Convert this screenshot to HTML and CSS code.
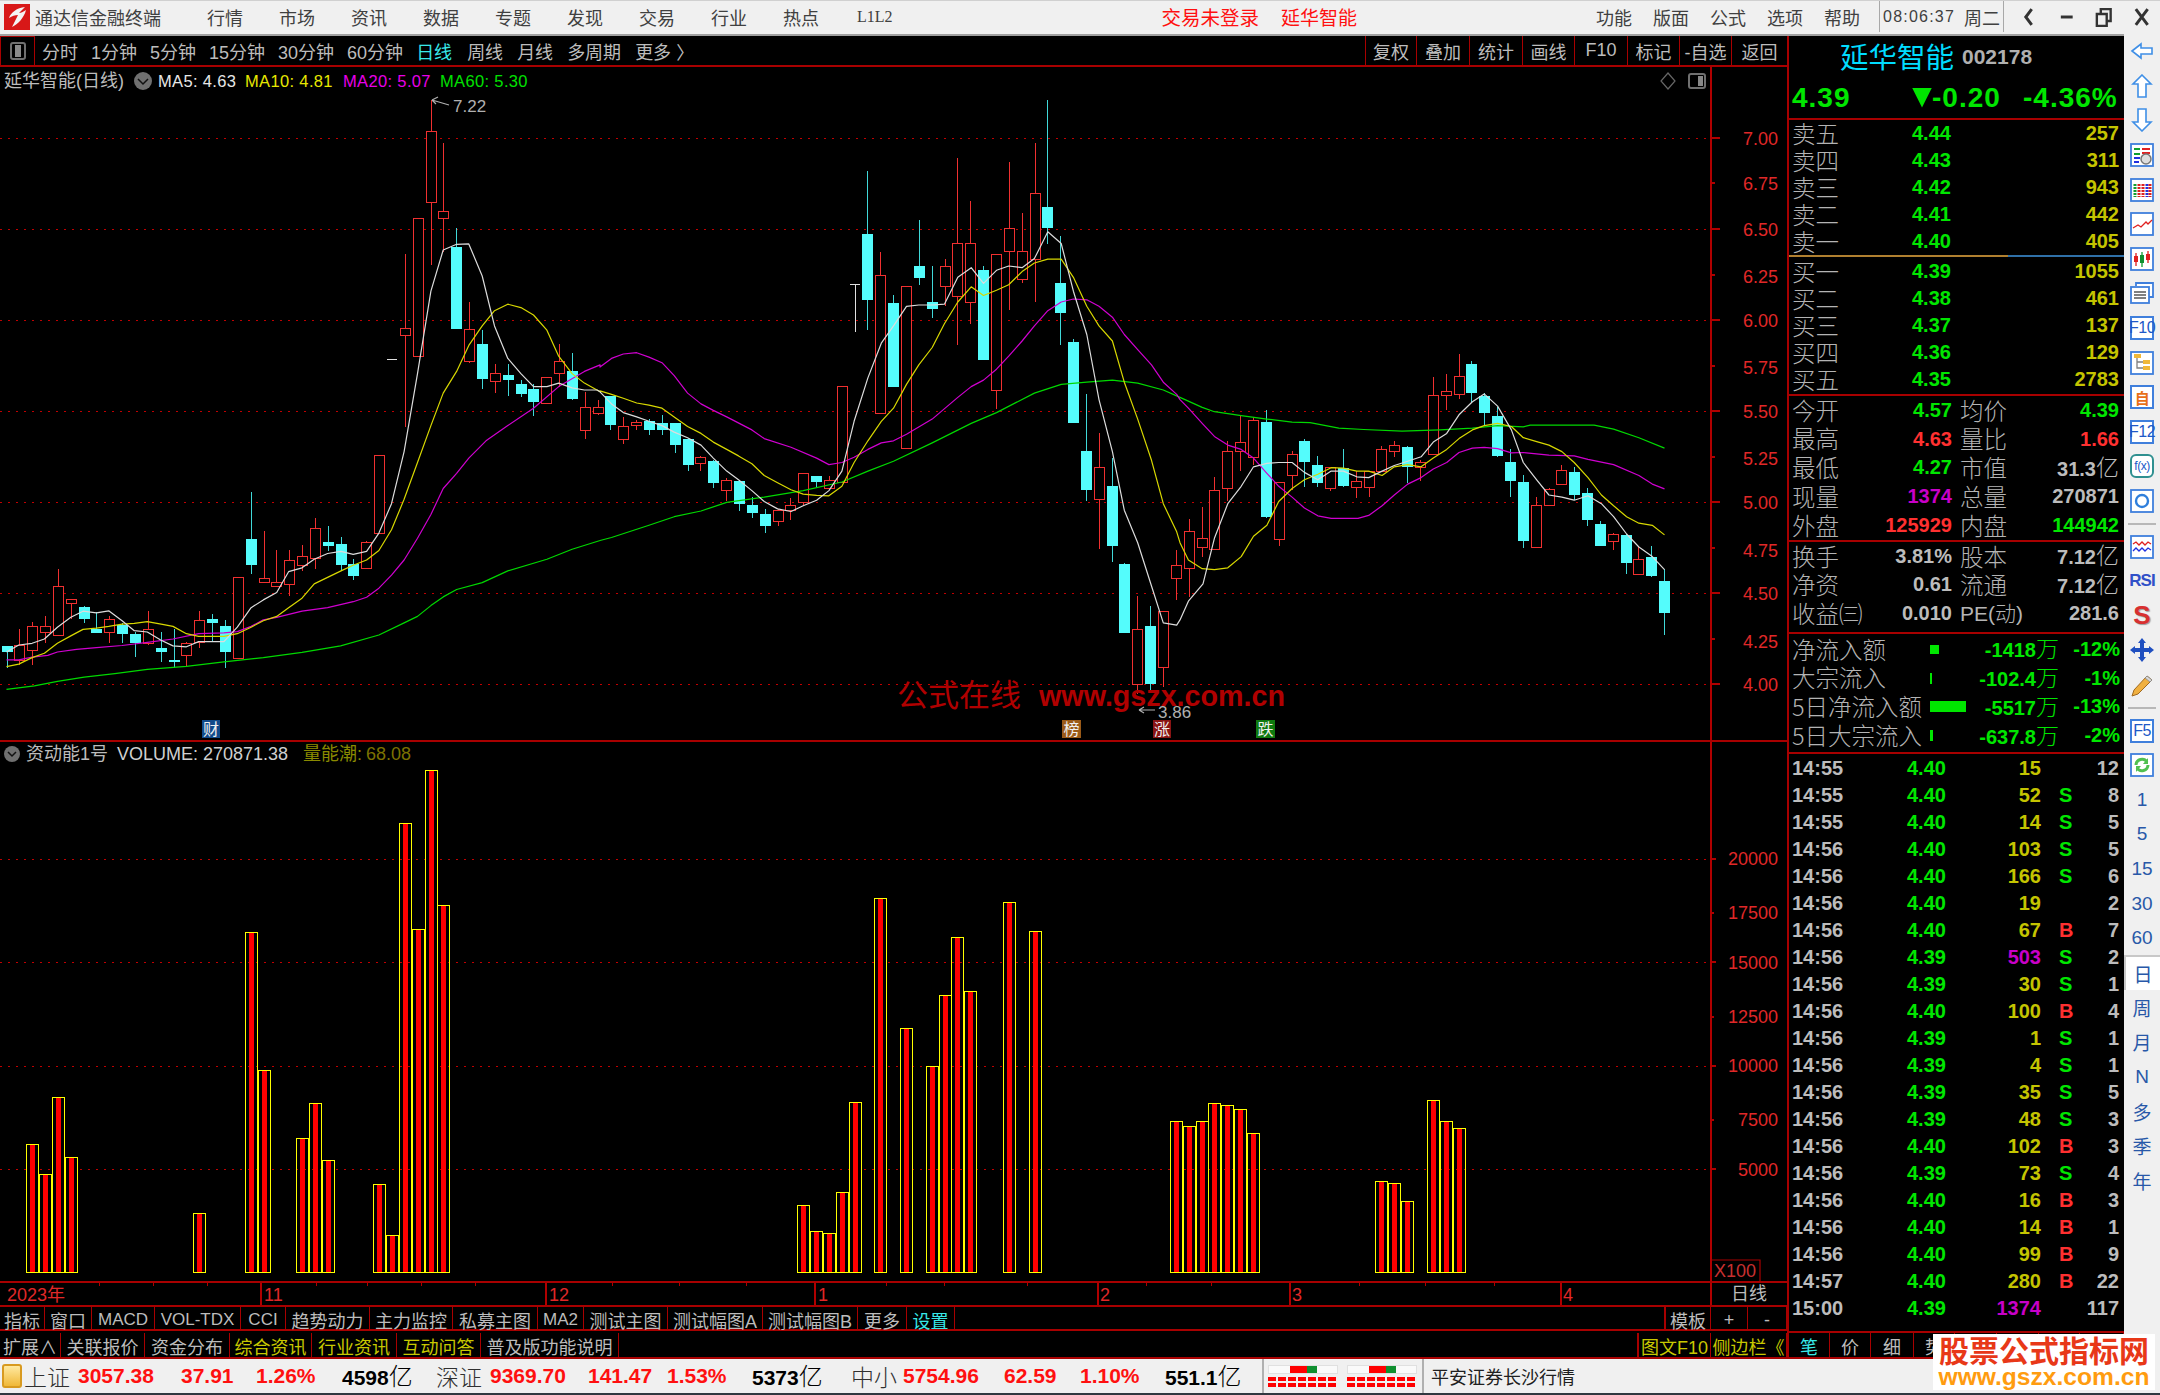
FILE: index.html
```html
<!DOCTYPE html>
<html lang="zh-CN">
<head>
<meta charset="utf-8">
<title>通达信金融终端</title>
<link rel="stylesheet" href="styles.css">
</head>
<body>
<div class="app">
  <header class="titlebar">
    <svg class="logo" viewBox="0 0 26 26"><rect width="26" height="26" fill="#d81818"/><path d="M21 3 C13 4 7 8 5 14 C8 12 11 11 14 11 L8 23 C14 20 20 14 22 6 C19 8 17 9 15 9 Z" fill="#f4f4f4"/></svg>
    <span class="brand">通达信金融终端</span>
    <nav class="menu">
      <span>行情</span><span>市场</span><span>资讯</span><span>数据</span><span>专题</span><span>发现</span><span>交易</span><span>行业</span><span>热点</span><span class="menu-l2">L1L2</span>
    </nav>
    <div class="alert"><span class="alert-a">交易未登录</span><span class="alert-b">延华智能</span></div>
    <nav class="menu menu-right"><span>功能</span><span>版面</span><span>公式</span><span>选项</span><span>帮助</span></nav>
    <div class="clock"><span class="clock-time">08:06:37</span><span class="clock-day">周二</span></div>
    <div class="winbtns">
      <svg viewBox="0 0 38 30"><path d="M22 7 L16 15 L22 23" class="win-stroke"/></svg>
      <svg viewBox="0 0 38 30"><path d="M13 15 H25" class="win-stroke"/></svg>
      <svg viewBox="0 0 38 30"><path d="M12 12 H22 V24 H12 Z M16 12 V7 H26 V19 H22" class="win-stroke win-thin"/></svg>
      <svg viewBox="0 0 38 30"><path d="M13 7 L25 23 M25 7 L13 23" class="win-stroke"/></svg>
    </div>
  </header>

  <div class="workspace">
    <section class="charts">
      <nav class="periods">
        <span class="period-toggle"><i class="split-ico"></i></span>
        <div class="period-list">
          <span>分时</span><span>1分钟</span><span>5分钟</span><span>15分钟</span><span>30分钟</span><span>60分钟</span><span class="is-cyan">日线</span>
        </div>
        <div class="period-list period-list-b">
          <span>周线</span><span>月线</span><span>多周期</span><span>更多 〉</span>
        </div>
        <div class="period-tools">
          <span>复权</span><span>叠加</span><span>统计</span><span>画线</span><span>F10</span><span>标记</span><span>-自选</span><span>返回</span>
        </div>
      </nav>

      <svg id="price" class="chart chart-price" viewBox="0 67 1787 673">
        <g class="grid">
          <path d="M0 138.5H1711M0 229.5H1711M0 320.5H1711M0 411.5H1711M0 502.5H1711M0 593.5H1711M0 684.5H1711"/>
        </g>
        <path class="axis" d="M1711 67V740"/>
        <path class="axis" d="M1711 138h9M1711 229h9M1711 320h9M1711 411h9M1711 502h9M1711 593h9M1711 684h9M1711 183h4M1711 275h4M1711 366h4M1711 457h4M1711 548h4M1711 639h4"/>
        <g class="t-axis">
          <text x="1778" y="139">7.00</text><text x="1778" y="184">6.75</text><text x="1778" y="230">6.50</text><text x="1778" y="277">6.25</text><text x="1778" y="321">6.00</text><text x="1778" y="368">5.75</text><text x="1778" y="412">5.50</text><text x="1778" y="459">5.25</text><text x="1778" y="503">5.00</text><text x="1778" y="551">4.75</text><text x="1778" y="594">4.50</text><text x="1778" y="642">4.25</text><text x="1778" y="685">4.00</text>
        </g>
        <g id="candles"></g>
        <g id="malines"></g>
        <text class="t-name" x="4" y="87">延华智能(日线)</text>
        <circle class="t-circle" cx="143" cy="81" r="9"/><path class="t-chev" d="M138 79 L143 84 L148 79"/>
        <text class="t-ma ma5" x="158" y="87">MA5: 4.63</text>
        <text class="t-ma ma10" x="245" y="87">MA10: 4.81</text>
        <text class="t-ma ma20" x="343" y="87">MA20: 5.07</text>
        <text class="t-ma ma60" x="440" y="87">MA60: 5.30</text>
        <path class="t-arrow" d="M449 105 L432 100 M432 100 L438 97 M432 100 L436 104"/>
        <text class="t-note" x="453" y="112">7.22</text>
        <path class="t-arrow" d="M1155 710 H1139 M1139 710 L1144 707 M1139 710 L1144 713"/>
        <text class="t-water-cn" x="897" y="706">公式在线</text>
        <text class="t-water-en" x="1039" y="706">www.gszx.com.cn</text>
        <text class="t-note" x="1158" y="718">3.86</text>
        <rect class="badge-blue" x="202" y="720" width="18" height="18"/><text class="t-badge" x="211" y="735">财</text>
        <rect class="badge-brown" x="1062" y="720" width="19" height="18"/><text class="t-badge" x="1071.5" y="735">榜</text>
        <rect class="badge-red" x="1153" y="720" width="18" height="18"/><text class="t-badge" x="1162" y="735">涨</text>
        <rect class="badge-green" x="1256" y="720" width="19" height="18"/><text class="t-badge" x="1265.5" y="735">跌</text>
        <path class="t-diamond" d="M1668 73 L1675 81 L1668 89 L1661 81 Z"/>
        <rect class="t-win" x="1689" y="74" width="16" height="14" rx="2"/><rect class="t-win-bar" x="1698" y="76" width="5" height="10"/>
      </svg>

      <svg id="volume" class="chart chart-volume" viewBox="0 742 1787 539">
        <g class="grid"><path d="M0 859.5H1711M0 962.5H1711M0 1066.5H1711M0 1169.5H1711"/></g>
        <path class="axis" d="M1711 742V1281M1711 859h5M1711 962h5M1711 1066h5M1711 1169h5M1711 913h3M1711 1017h3M1711 1120h3"/>
        <g class="t-axis t-axis-vol">
          <text x="1778" y="859">20000</text><text x="1778" y="913">17500</text><text x="1778" y="963">15000</text><text x="1778" y="1017">12500</text><text x="1778" y="1066">10000</text><text x="1778" y="1120">7500</text><text x="1778" y="1170">5000</text>
        </g>
        <g id="bars"></g>
        <circle class="t-circle" cx="12" cy="754" r="8"/><path class="t-chev" d="M8 752 L12 756 L16 752"/>
        <text class="t-name" x="26" y="760">资动能1号</text>
        <text class="t-name t-latin" x="117" y="760">VOLUME: 270871.38</text>
        <text class="t-name t-olive" x="303" y="760">量能潮:</text>
        <text class="t-name t-latin t-dim" x="366" y="760">68.08</text>
        <path class="t-box" d="M1711 1260H1760V1281"/>
        <text class="t-x100" x="1714" y="1277">X100</text>
      </svg>

      <svg class="chart chart-axis" viewBox="0 1283 1787 22">
        <path class="axis" d="M261 1283V1305M546 1283V1305M815 1283V1305M1098 1283V1305M1290 1283V1305M1561 1283V1305M1711 1283V1305"/>
        <path class="axis axis-thin" d="M99 1283v3M153 1283v3M207 1283v3M316 1283v3M367 1283v3M421 1283v3M475 1283v3M612 1283v3M679 1283v3M746 1283v3M886 1283v3M944 1283v3M1027 1283v3M1146 1283v3M1211 1283v3M1359 1283v3M1425 1283v3M1494 1283v3"/>
        <g class="t-month">
          <text x="7" y="1301">2023年</text><text x="264" y="1301">11</text><text x="549" y="1301">12</text><text x="818" y="1301">1</text><text x="1100" y="1301">2</text><text x="1292" y="1301">3</text><text x="1563" y="1301">4</text>
        </g>
        <text class="t-period" x="1749" y="1300">日线</text>
      </svg>

      <nav class="tabs tabs-a">
        <span>指标</span><span>窗口</span><span class="tab-latin">MACD</span><span class="tab-latin">VOL-TDX</span><span class="tab-latin">CCI</span><span>趋势动力</span><span>主力监控</span><span>私募主图</span><span class="tab-latin">MA2</span><span>测试主图</span><span>测试幅图A</span><span>测试幅图B</span><span>更多</span><span class="is-cyan">设置</span><span></span><span class="tab-left">模板</span><span>+</span><span>-</span>
      </nav>
      <nav class="tabs tabs-b">
        <span>扩展∧</span><span>关联报价</span><span>资金分布</span><span class="is-olive">综合资讯</span><span class="is-olive">行业资讯</span><span class="is-olive">互动问答</span><span>普及版功能说明</span><span></span><span class="is-olive tab-left">图文F10</span><span class="is-olive">侧边栏《</span>
      </nav>
    </section>

    <aside class="quote">
      <div class="q-head">
        <div class="q-name"><span class="q-title">延华智能</span><span class="q-code">002178</span></div>
        <div class="q-price"><span>4.39</span><span class="q-change"><i class="q-down"></i>-0.20</span><span>-4.36%</span></div>
      </div>
      <div class="q-book">
        <div class="b-row"><span class="lbl">卖五</span><span class="g">4.44</span><span class="y r">257</span></div>
        <div class="b-row"><span class="lbl">卖四</span><span class="g">4.43</span><span class="y r">311</span></div>
        <div class="b-row"><span class="lbl">卖三</span><span class="g">4.42</span><span class="y r">943</span></div>
        <div class="b-row"><span class="lbl">卖二</span><span class="g">4.41</span><span class="y r">442</span></div>
        <div class="b-row"><span class="lbl">卖一</span><span class="g">4.40</span><span class="y r">405</span></div>
      </div>
      <div class="q-divider"></div>
      <div class="q-book q-book-bid">
        <div class="b-row"><span class="lbl">买一</span><span class="g">4.39</span><span class="y r">1055</span></div>
        <div class="b-row"><span class="lbl">买二</span><span class="g">4.38</span><span class="y r">461</span></div>
        <div class="b-row"><span class="lbl">买三</span><span class="g">4.37</span><span class="y r">137</span></div>
        <div class="b-row"><span class="lbl">买四</span><span class="g">4.36</span><span class="y r">129</span></div>
        <div class="b-row"><span class="lbl">买五</span><span class="g">4.35</span><span class="y r">2783</span></div>
      </div>
      <div class="q-stats">
        <div class="s-row"><span class="lbl">今开</span><span class="g r">4.57</span><span class="lbl l2">均价</span><span class="g r">4.39</span></div>
        <div class="s-row"><span class="lbl">最高</span><span class="red r">4.63</span><span class="lbl l2">量比</span><span class="red r">1.66</span></div>
        <div class="s-row"><span class="lbl">最低</span><span class="g r">4.27</span><span class="lbl l2">市值</span><span class="w r">31.3<em>亿</em></span></div>
        <div class="s-row"><span class="lbl">现量</span><span class="m r">1374</span><span class="lbl l2">总量</span><span class="w r">270871</span></div>
        <div class="s-row"><span class="lbl">外盘</span><span class="red r">125929</span><span class="lbl l2">内盘</span><span class="g r">144942</span></div>
      </div>
      <div class="q-stats q-stats-b">
        <div class="s-row"><span class="lbl">换手</span><span class="w r">3.81%</span><span class="lbl l2">股本</span><span class="w r">7.12<em>亿</em></span></div>
        <div class="s-row"><span class="lbl">净资</span><span class="w r">0.61</span><span class="lbl l2">流通</span><span class="w r">7.12<em>亿</em></span></div>
        <div class="s-row"><span class="lbl">收益㈢</span><span class="w r">0.010</span><span class="lbl l2 lbl-pe">PE(动)</span><span class="w r">281.6</span></div>
      </div>
      <div class="q-flow">
        <div class="f-row"><span class="lbl">净流入额</span><i class="fbar fbar-a"></i><span class="g r">-1418<em>万</em></span><span class="g r">-12%</span></div>
        <div class="f-row"><span class="lbl">大宗流入</span><i class="fbar fbar-b"></i><span class="g r">-102.4<em>万</em></span><span class="g r">-1%</span></div>
        <div class="f-row"><span class="lbl">5日净流入额</span><i class="fbar fbar-c"></i><span class="g r">-5517<em>万</em></span><span class="g r">-13%</span></div>
        <div class="f-row"><span class="lbl">5日大宗流入</span><i class="fbar fbar-d"></i><span class="g r">-637.8<em>万</em></span><span class="g r">-2%</span></div>
      </div>
      <div class="q-ticks">
        <div class="t-row"><span class="w">14:55</span><span class="g">4.40</span><span class="y r">15</span><span></span><span class="w r">12</span></div>
        <div class="t-row"><span class="w">14:55</span><span class="g">4.40</span><span class="y r">52</span><span class="g">S</span><span class="w r">8</span></div>
        <div class="t-row"><span class="w">14:55</span><span class="g">4.40</span><span class="y r">14</span><span class="g">S</span><span class="w r">5</span></div>
        <div class="t-row"><span class="w">14:56</span><span class="g">4.40</span><span class="y r">103</span><span class="g">S</span><span class="w r">5</span></div>
        <div class="t-row"><span class="w">14:56</span><span class="g">4.40</span><span class="y r">166</span><span class="g">S</span><span class="w r">6</span></div>
        <div class="t-row"><span class="w">14:56</span><span class="g">4.40</span><span class="y r">19</span><span></span><span class="w r">2</span></div>
        <div class="t-row"><span class="w">14:56</span><span class="g">4.40</span><span class="y r">67</span><span class="red">B</span><span class="w r">7</span></div>
        <div class="t-row"><span class="w">14:56</span><span class="g">4.39</span><span class="m r">503</span><span class="g">S</span><span class="w r">2</span></div>
        <div class="t-row"><span class="w">14:56</span><span class="g">4.39</span><span class="y r">30</span><span class="g">S</span><span class="w r">1</span></div>
        <div class="t-row"><span class="w">14:56</span><span class="g">4.40</span><span class="y r">100</span><span class="red">B</span><span class="w r">4</span></div>
        <div class="t-row"><span class="w">14:56</span><span class="g">4.39</span><span class="y r">1</span><span class="g">S</span><span class="w r">1</span></div>
        <div class="t-row"><span class="w">14:56</span><span class="g">4.39</span><span class="y r">4</span><span class="g">S</span><span class="w r">1</span></div>
        <div class="t-row"><span class="w">14:56</span><span class="g">4.39</span><span class="y r">35</span><span class="g">S</span><span class="w r">5</span></div>
        <div class="t-row"><span class="w">14:56</span><span class="g">4.39</span><span class="y r">48</span><span class="g">S</span><span class="w r">3</span></div>
        <div class="t-row"><span class="w">14:56</span><span class="g">4.40</span><span class="y r">102</span><span class="red">B</span><span class="w r">3</span></div>
        <div class="t-row"><span class="w">14:56</span><span class="g">4.39</span><span class="y r">73</span><span class="g">S</span><span class="w r">4</span></div>
        <div class="t-row"><span class="w">14:56</span><span class="g">4.40</span><span class="y r">16</span><span class="red">B</span><span class="w r">3</span></div>
        <div class="t-row"><span class="w">14:56</span><span class="g">4.40</span><span class="y r">14</span><span class="red">B</span><span class="w r">1</span></div>
        <div class="t-row"><span class="w">14:56</span><span class="g">4.40</span><span class="y r">99</span><span class="red">B</span><span class="w r">9</span></div>
        <div class="t-row"><span class="w">14:57</span><span class="g">4.40</span><span class="y r">280</span><span class="red">B</span><span class="w r">22</span></div>
        <div class="t-row"><span class="w">15:00</span><span class="g">4.39</span><span class="m r">1374</span><span></span><span class="w r">117</span></div>
      </div>
      <nav class="q-tabs"><span class="is-cyan">笔</span><span>价</span><span>细</span><span>势</span><span></span><span></span><span></span><span></span></nav>
    </aside>

    <aside class="tools">
      <span class="tool"><svg viewBox="0 0 24 24"><path class="ico-arrow" d="M2 12 L11 5 V9 H22 V15 H11 V19 Z"/></svg></span>
      <span class="tool"><svg viewBox="0 0 24 24"><path class="ico-arrow" d="M12 1 L21 10 H16 V23 H8 V10 H3 Z"/></svg></span>
      <span class="tool"><svg viewBox="0 0 24 24"><path class="ico-arrow" d="M12 23 L21 14 H16 V1 H8 V14 H3 Z"/></svg></span>
      <span class="tool"><svg viewBox="0 0 24 24"><rect class="ico-frame" x="1" y="1" width="22" height="22"/><path class="l-g" d="M4 6H10M4 11H10"/><path class="l-r" d="M12 6H20M12 10H20"/><path class="l-b" d="M4 15H10M4 19H9"/><circle class="ico-clock" cx="16" cy="16" r="5"/></svg></span>
      <span class="tool"><svg viewBox="0 0 24 24"><rect class="ico-frame" x="1" y="1" width="22" height="22"/><path class="l-g l-dash" d="M5 6V19"/><path class="l-r l-dash" d="M9 6V19M13 6V19"/><path class="l-b l-dash" d="M17 6V19"/><path class="l-r l-dash" d="M20 6V19"/></svg></span>
      <span class="tool"><svg viewBox="0 0 24 24"><rect class="ico-frame" x="1" y="1" width="22" height="22"/><path class="l-r l-thin" d="M3 16 L8 13 L11 15 L16 10 L18 12 L22 8"/></svg></span>
      <span class="tool"><svg viewBox="0 0 24 24"><rect class="ico-frame" x="1" y="1" width="22" height="22"/><path class="l-r l-thin" d="M6 6V19M18 4V16"/><path class="l-g l-thin" d="M12 5V20"/><rect class="f-r" x="4" y="9" width="4" height="6"/><rect class="f-g" x="10" y="8" width="4" height="8"/><rect class="f-r" x="16" y="7" width="4" height="6"/></svg></span>
      <span class="tool"><svg viewBox="0 0 24 24"><path class="ico-frame" d="M6 5 V2 H23 V16 H19"/><rect class="ico-frame" x="1" y="6" width="18" height="16"/><path class="l-gray" d="M4 11H16M4 14H16M4 17H16"/></svg></span>
      <span class="tool"><b class="frame-text">F10</b></span>
      <span class="tool"><svg viewBox="0 0 24 24"><rect class="ico-frame" x="1" y="1" width="22" height="22"/><rect class="f-y" x="4" y="3" width="7" height="4"/><rect class="f-y" x="13" y="9" width="7" height="4"/><rect class="f-y" x="13" y="15" width="7" height="4"/><path class="l-gray l-thin" d="M7 7V17H13M7 11H13"/></svg></span>
      <span class="tool"><b class="frame-text frame-orange">自</b></span>
      <span class="tool"><b class="frame-text">F12</b></span>
      <span class="tool"><b class="frame-text frame-teal"><i>f</i>(x)</b></span>
      <span class="tool"><svg viewBox="0 0 24 24"><rect class="ico-frame" x="1" y="1" width="22" height="22"/><circle class="ico-ring" cx="12" cy="12" r="6"/></svg></span>
      <span class="tool-sep"></span>
      <span class="tool"><svg viewBox="0 0 24 24"><rect class="ico-frame" x="1" y="1" width="22" height="22"/><path class="l-r l-thin" d="M3 9 L6 7 L9 10 L12 7 L15 10 L18 7 L21 9"/><path class="l-b l-thin" d="M3 16 L6 13 L9 16 L12 13 L15 16 L18 13 L21 15"/></svg></span>
      <span class="tool"><b class="tool-rsi">RSI</b></span>
      <span class="tool"><b class="tool-dollar">S</b></span>
      <span class="tool"><svg viewBox="0 0 24 24"><path class="f-blue" d="M12 0 L16 5 H14 V10 H19 V8 L24 12 L19 16 V14 H14 V19 H16 L12 24 L8 19 H10 V14 H5 V16 L0 12 L5 8 V10 H10 V5 H8 Z"/></svg></span>
      <span class="tool"><svg viewBox="0 0 24 24"><path class="ico-pencil" d="M4 17 L17 3 L22 7 L8 21 L2 23 Z"/><path class="ico-pencil-tip" d="M17 3 L22 7 L20 9 L15 5 Z"/></svg></span>
      <span class="tool-sep"></span>
      <span class="tool"><b class="frame-text">F5</b></span>
      <span class="tool"><svg viewBox="0 0 24 24"><rect class="ico-frame" x="1" y="1" width="22" height="22"/><path class="ico-refresh" d="M6 12 A6 6 0 0 1 17 9 M18 12 A6 6 0 0 1 7 15"/><path class="f-g2" d="M18 5 V11 H13 Z M6 19 V13 H11 Z"/></svg></span>
      <span class="tool tool-t">1</span>
      <span class="tool tool-t">5</span>
      <span class="tool tool-t">15</span>
      <span class="tool tool-t">30</span>
      <span class="tool tool-t">60</span>
      <span class="tool tool-t tool-on">日</span>
      <span class="tool tool-t">周</span>
      <span class="tool tool-t">月</span>
      <span class="tool tool-t">N</span>
      <span class="tool tool-t">多</span>
      <span class="tool tool-t">季</span>
      <span class="tool tool-t">年</span>
    </aside>
  </div>

  <footer class="status">
    <i class="st-icon"></i>
    <span class="st-name">上证</span><span class="st-num">3057.38</span><span class="st-num">37.91</span><span class="st-num">1.26%</span><span class="st-amt">4598<em>亿</em></span>
    <span class="st-name">深证</span><span class="st-num">9369.70</span><span class="st-num">141.47</span><span class="st-num">1.53%</span><span class="st-amt">5373<em>亿</em></span>
    <span class="st-name">中小</span><span class="st-num">5754.96</span><span class="st-num">62.59</span><span class="st-num">1.10%</span><span class="st-amt">551.1<em>亿</em></span>
    <div class="st-meters">
      <div class="meter"><div class="meter-top"><i class="m-red"></i><i class="m-green"></i></div><i class="m-dots"></i><i class="m-dots"></i></div>
      <div class="meter"><div class="meter-top"><i class="m-red"></i><i class="m-green"></i></div><i class="m-dots"></i><i class="m-dots"></i></div>
    </div>
    <span class="st-broker">平安证券长沙行情</span>
  </footer>

  <div class="watermark"><span class="wm-cn">股票公式指标网</span><span class="wm-en">www.gszx.com.cn</span></div>
</div>
<script src="chart.js"></script>
</body>
</html>
```

FILE: styles.css
```css
* { box-sizing: border-box; }
html, body { margin: 0; padding: 0; background: #000; }
body { width: 2160px; height: 1395px; overflow: hidden; font-family: "Liberation Sans", "Noto Sans CJK SC", sans-serif; }
em, i { font-style: normal; }
.app { position: relative; width: 2160px; height: 1395px; display: flex; flex-direction: column; }

/* title bar */
.titlebar { height: 36px; flex: none; display: flex; align-items: center; padding-bottom: 2px; background: #f0f0f0; border-top: 1px solid #d0d0d0; border-bottom: 2px solid #a0a0a0; color: #404040; font-size: 18px; }
.logo { width: 26px; height: 26px; margin-left: 4px; flex: none; }
.brand { margin-left: 5px; width: 127px; white-space: nowrap; }
.menu { display: flex; align-items: center; gap: 36px; margin-left: 46px; white-space: nowrap; }
.menu-l2 { font-family: "Liberation Serif", serif; font-size: 16px; margin-left: 2px; }
.alert { display: flex; align-items: center; gap: 22px; margin-left: 269px; color: #ff1010; white-space: nowrap; }
.alert-a { font-size: 19.5px; }
.alert-b { font-size: 19px; }
.menu-right { gap: 21px; margin-left: 239px; }
.clock { display: flex; align-items: center; gap: 9px; height: 100%; margin-left: 19px; padding: 0 3px; width: 125px; border-left: 1px solid #a8a8a8; border-right: 1px solid #a8a8a8; white-space: nowrap; }
.clock-time { font-size: 16px; letter-spacing: 1.2px; }
.winbtns { display: grid; grid-template-columns: repeat(4, 37.5px); margin-left: 6px; }
.winbtns svg { width: 37.5px; height: 30px; display: block; }
.win-stroke { fill: none; stroke: #333; stroke-width: 3; }
.win-thin { stroke-width: 2.4; }

/* workspace */
.workspace { flex: none; height: 1323px; display: flex; }
.charts { width: 1787px; flex: none; display: flex; flex-direction: column; background: #000; }

.periods { height: 31px; flex: none; display: flex; align-items: center; border-bottom: 2px solid #a80000; color: #bcbcbc; font-size: 18px; white-space: nowrap; }
.period-toggle { width: 35px; height: 100%; display: flex; align-items: center; justify-content: center; border-right: 1px solid #a80000; border-left: 1px solid #a80000; border-top: 1px solid #a80000; }
.split-ico { display: block; position: relative; width: 16px; height: 18px; border: 2px solid #707070; border-radius: 3px; }
.split-ico::after { content: ""; position: absolute; left: 3px; top: 1px; width: 6px; height: 12px; background: #8a8a8a; }
.period-list { display: flex; gap: 13px; margin-left: 7px; }
.period-list-b { gap: 14px; margin-left: 15px; }
.period-tools { margin-left: auto; width: 422px; height: 100%; display: grid; grid-template-columns: 51px 53px 53px 52px 53px 52px 52px 56px; }
.period-tools span { display: flex; align-items: center; justify-content: center; border-left: 1px solid #a80000; }
.is-cyan { color: #38e8e8; }
.is-olive { color: #c8c800; }

.chart { display: block; width: 1787px; flex: none; background: #000; overflow: visible; }
.chart-price { height: 675px; border-bottom: 2px solid #a80000; }
.chart-volume { height: 541px; border-bottom: 2px solid #a80000; }
.chart-axis { height: 24px; border-bottom: 2px solid #a80000; }

.grid path { fill: none; stroke: #c00000; stroke-width: 1; stroke-dasharray: 2 6; shape-rendering: crispEdges; }
.axis { fill: none; stroke: #b00000; stroke-width: 2; shape-rendering: crispEdges; }
.axis-thin { stroke-width: 1; }
.t-axis text { font-family: "Liberation Sans", sans-serif; font-size: 18px; fill: #e02828; text-anchor: end; dominant-baseline: central; }
.t-month text { font-family: "Liberation Sans", "Noto Sans CJK SC", sans-serif; font-size: 18px; fill: #e02828; }
.t-period { font-family: "Noto Sans CJK SC", sans-serif; font-size: 18px; fill: #bcbcbc; text-anchor: middle; }
.t-name { font-family: "Liberation Sans", "Noto Sans CJK SC", sans-serif; font-size: 18px; fill: #bcbcbc; }
.t-latin { font-size: 18px; fill: #d0d0d0; }
.t-olive { fill: #8a8a00; }
.t-dim { fill: #7c7200; }
.t-circle { fill: #707070; }
.t-chev { fill: none; stroke: #111; stroke-width: 1.5; }
.t-ma { font-family: "Liberation Sans", sans-serif; font-size: 16.5px; letter-spacing: .35px; }
.ma5 { fill: #e8e8e8; }
.ma10 { fill: #e8e800; }
.ma20 { fill: #e800e8; }
.ma60 { fill: #00e000; }
.t-arrow { fill: none; stroke: #b0b0b0; stroke-width: 1.2; }
.t-note { font-family: "Liberation Sans", sans-serif; font-size: 17px; fill: #b0b0b0; }
.t-water-cn { font-family: "Noto Sans CJK SC", sans-serif; font-size: 31px; fill: #b00000; }
.t-water-en { font-family: "Liberation Sans", sans-serif; font-weight: 700; font-size: 28.7px; fill: #b00000; }
.t-badge { font-family: "Noto Sans CJK SC", sans-serif; font-size: 16px; fill: #f0f0f0; text-anchor: middle; }
.badge-blue { fill: #114a8a; }
.badge-brown { fill: #9a5a18; }
.badge-red { fill: #8a1414; }
.badge-green { fill: #0f7a0f; }
.t-diamond { fill: none; stroke: #666; stroke-width: 1.2; }
.t-win { fill: none; stroke: #707070; stroke-width: 2; }
.t-win-bar { fill: #888; }
.t-box { fill: none; stroke: #a80000; stroke-width: 1.2; }
.t-x100 { font-family: "Liberation Sans", sans-serif; font-size: 18px; fill: #c83030; }

.wick-r { stroke: #f03030; stroke-width: 1; shape-rendering: crispEdges; }
.wick-c { stroke: #40d8d8; stroke-width: 1; shape-rendering: crispEdges; }
.wick-w { stroke: #e0e0e0; stroke-width: 1; shape-rendering: crispEdges; }
.body-r { fill: #000; stroke: #f03030; stroke-width: 1; shape-rendering: crispEdges; }
.body-c { fill: #54fcfc; shape-rendering: crispEdges; }
.ma-line { fill: none; stroke-width: 1.2; stroke-linejoin: round; }
.line-w { stroke: #dcdcdc; }
.line-y { stroke: #d8d800; }
.line-m { stroke: #d000d0; }
.line-g { stroke: #00d800; }
.bar-o { fill: none; stroke: #ffff00; stroke-width: 1; shape-rendering: crispEdges; }
.bar-i { fill: #ff0000; shape-rendering: crispEdges; }

.tabs { flex: none; display: grid; color: #bcbcbc; font-size: 18px; white-space: nowrap; background: #000; }
.tabs span { display: flex; align-items: center; justify-content: center; border-right: 1px solid #a80000; min-width: 0; }
.tab-latin { font-size: 17px; }
.tab-left { border-left: 1px solid #a80000; }
.tabs-a { height: 24px; border-bottom: 2px solid #a80000; grid-template-columns: 45px 47px 63px 86px 45px 84px 83px 85px 46px 84px 95px 95px 49px 48px 1fr 46px 37px 39px; }
.tabs-b { height: 28px; padding-top: 2px; border-bottom: 2px solid #a80000; grid-template-columns: 61px 84px 85px 82px 85px 84px 138px 1fr 73px 76px; }

/* quote panel */
.quote { width: 337px; flex: none; display: flex; flex-direction: column; background: #000; border-left: 2px solid #a80000; color: #c0c0c0; font-size: 20px; font-weight: 700; }
.q-head { height: 84px; flex: none; border-bottom: 2px solid #a80000; }
.q-name { height: 38px; display: flex; align-items: center; padding-left: 51px; gap: 8px; }
.q-title { font-size: 28.5px; font-weight: 400; color: #00dcff; font-family: "Noto Sans CJK SC", sans-serif; }
.q-code { font-size: 21px; color: #b0b0b0; margin-top: 4px; }
.q-price { height: 44px; padding-top: 3px; display: grid; grid-template-columns: 120px 111px 1fr; align-items: center; padding-left: 3px; font-size: 28px; letter-spacing: 1px; color: #00e600; white-space: nowrap; }
.q-change { display: flex; align-items: center; gap: 0; }
.q-down { width: 20px; height: 20px; background: #00e600; clip-path: polygon(0 0, 100% 0, 50% 100%); }
.q-book { height: 135px; flex: none; padding: 0 5px 0 3px; }
.q-book-bid { height: 139px; padding-top: 1px; border-bottom: 2px solid #a80000; }
.q-divider { height: 2px; flex: none; background: linear-gradient(90deg, #b08030 0, #b08030 219px, #2f70a8 219px); }
.b-row { height: 27px; display: grid; grid-template-columns: 120px 50px 1fr; align-items: center; }
.lbl { font-family: "Noto Sans CJK SC", sans-serif; font-size: 23.5px; font-weight: 300; color: #b4b4b4; white-space: nowrap; line-height: 1; }
.g { color: #00e600; }
.y { color: #c4c400; }
.w { color: #bcbcbc; }
.m { color: #c800c8; }
.red { color: #ff3030; }
.r { text-align: right; white-space: nowrap; }
.r em { font-family: "Noto Sans CJK SC", sans-serif; font-weight: 300; font-size: 23px; line-height: 1; }
.q-stats { height: 146px; flex: none; padding: 0 5px 0 3px; border-bottom: 2px solid #a80000; }
.q-stats-b { height: 92px; padding-bottom: 4px; }
.s-row { height: 28.8px; display: grid; grid-template-columns: 50px 110px 58px 1fr; align-items: center; }
.q-stats-b .s-row { height: 28.6px; }
.l2 { padding-left: 8px; }
.lbl-pe { font-family: "Liberation Sans", "Noto Sans CJK SC", sans-serif; font-size: 21px; }
.q-flow { height: 120px; flex: none; padding: 1px 4px 0 3px; border-bottom: 2px solid #a80000; }
.f-row { height: 28.8px; display: grid; grid-template-columns: 138px 40px 1fr 61px; align-items: center; }
.f-row .r { white-space: nowrap; }
.fbar { display: block; background: #00e600; }
.fbar-a { width: 9px; height: 9px; }
.fbar-b { width: 2px; height: 11px; }
.fbar-c { width: 36px; height: 11px; }
.fbar-d { width: 3px; height: 11px; }
.q-ticks { height: 577px; flex: none; padding: 1px 5px 0 3px; }
.t-row { height: 27px; display: grid; grid-template-columns: 115px 50px 84px 18px 18px 1fr; align-items: center; }
.t-row span:nth-child(4) { grid-column: 5; }
.q-tabs { height: 28px; flex: none; display: grid; grid-template-columns: 41px 41px 43px 41px 42px 42px 41px 1fr; border-top: 2px solid #a80000; border-bottom: 2px solid #a80000; font-family: "Noto Sans CJK SC", sans-serif; font-weight: 400; font-size: 18px; color: #bcbcbc; }
.q-tabs span { display: flex; align-items: center; justify-content: center; border-right: 1px solid #a80000; }

/* tool strip */
.tools { flex: 1; display: flex; flex-direction: column; margin-top: -2px; background: #f0f0f0; color: #2050a8; font-family: "Noto Sans CJK SC", sans-serif; }
.tool { height: 34.6px; flex: none; display: flex; align-items: center; justify-content: center; }
.tool svg { width: 24px; height: 24px; display: block; }
.tool-sep { height: 11px; flex: none; position: relative; }
.tool-sep::after { content: ""; position: absolute; left: 4px; right: 4px; top: 5px; height: 2px; background: #b8b8b8; }
.tool-t { font-size: 19px; font-family: "Liberation Sans", "Noto Sans CJK SC", sans-serif; color: #2858a8; }
.tool-on { background: #fff; border-left: 2px solid #c8c8c8; border-top: 2px solid #c8c8c8; }
.ico-arrow { fill: #fff; stroke: #3f8fe6; stroke-width: 1.6; }
.ico-frame { fill: #fff; stroke: #3f7fdc; stroke-width: 1.8; }
.l-g { stroke: #10a030; stroke-width: 2; fill: none; }
.l-r { stroke: #e02020; stroke-width: 2; fill: none; }
.l-b { stroke: #2030e0; stroke-width: 2; fill: none; }
.l-gray { stroke: #808080; stroke-width: 2; fill: none; }
.l-thin { stroke-width: 1.3; }
.l-dash { stroke-dasharray: 2 1; stroke-width: 3; }
.ico-clock { fill: #ddd; stroke: #777; stroke-width: 1.5; }
.f-r { fill: #e02020; }
.f-g { fill: #109030; }
.f-y { fill: #f0b838; }
.f-blue { fill: #1f4fc0; }
.f-g2 { fill: #50c050; }
.ico-ring { fill: none; stroke: #2f7fdc; stroke-width: 2.4; }
.ico-refresh { fill: none; stroke: #50c050; stroke-width: 3; }
.ico-pencil { fill: #f0b040; stroke: #a06a20; stroke-width: 1; }
.ico-pencil-tip { fill: #d8d8d8; stroke: #888; stroke-width: .8; }
.frame-text { width: 24px; height: 24px; display: flex; align-items: center; justify-content: center; background: #fff; border: 2px solid #3f7fdc; font-family: "Liberation Sans", sans-serif; font-weight: 400; font-size: 16px; letter-spacing: -.5px; color: #2058c8; }
.frame-orange { color: #e87018; font-family: "Noto Sans CJK SC", sans-serif; font-weight: 700; font-size: 15px; }
.frame-teal { border-color: #2f9090; border-radius: 6px; font-size: 12px; }
.tool-rsi { font-family: "Liberation Sans", sans-serif; font-size: 17px; color: #3050c8; letter-spacing: -1px; }
.tool-dollar { font-family: "Liberation Sans", sans-serif; font-size: 26px; color: #d83030; text-shadow: 1px 1px 1px #999; }

/* status */
.status { height: 36px; flex: none; display: grid; grid-template-columns: 22px 54px 103px 75px 86px 94px 54px 98px 79px 85px 99px 52px 101px 76px 85px 97px 166px 1fr; align-items: center; padding-left: 2px; background: #f0f0f0; color: #000; border-bottom: 2px solid #303840; white-space: nowrap; }
.st-icon { display: block; width: 20px; height: 24px; border: 2px solid #d89a20; border-radius: 3px; background: linear-gradient(#ffe9a0, #f0b838); }
.st-name { font-family: "Noto Sans CJK SC", sans-serif; font-size: 23px; font-weight: 300; line-height: 1; color: #303030; }
.st-num { font-size: 21px; font-weight: 700; color: #ff1010; }
.st-amt { font-size: 21px; font-weight: 700; color: #000; }
.st-amt em { font-family: "Noto Sans CJK SC", sans-serif; font-size: 24px; font-weight: 300; line-height: 1; }
.st-meters { display: flex; gap: 9px; height: 100%; align-items: center; padding: 0 4px; width: 162px; border-left: 2px solid #b0b0b0; border-right: 2px solid #b0b0b0; }
.meter { width: 70px; display: flex; flex-direction: column; gap: 2px; }
.meter-top { height: 9px; display: flex; justify-content: center; background: #fafafa; border: 1px solid #e0e0e0; margin-bottom: 1px; }
.m-red { display: block; width: 17px; background: #ff0000; }
.m-green { display: block; width: 10px; background: #109030; }
.m-dots { display: block; height: 4px; background: repeating-linear-gradient(90deg, #ff0000 0 8px, transparent 8px 10px); }
.st-broker { font-family: "Noto Sans CJK SC", sans-serif; font-size: 18px; color: #202020; padding-left: 3px; }

.watermark { position: absolute; left: 1933px; top: 1334px; width: 222px; height: 56px; background: #fff; display: flex; flex-direction: column; align-items: center; justify-content: center; }
.wm-cn { font-family: "Noto Sans CJK SC", sans-serif; font-weight: 700; font-size: 30px; line-height: 30px; color: #e83818; }
.wm-en { font-family: "Liberation Sans", sans-serif; font-weight: 700; font-size: 24.6px; line-height: 26px; color: #ff9c10; }
```

FILE: chart.js
```js
var SVG = 'http://www.w3.org/2000/svg';
function el(parent, name, attrs) {
  var n = document.createElementNS(SVG, name);
  for (var k in attrs) n.setAttribute(k, attrs[k]);
  parent.appendChild(n);
  return n;
}
var step = 12.85, first = 6.5;
function cx(i) { return Math.round(first + i * step); }
function py(v) { return Math.round(70 + v / 2.306); }

/* type, high, body top, body bottom, low — measured down the price pane */
var candles = [
['c',1328,1328,1342,1378],['r',1290,1326,1360,1372],['r',1272,1283,1338,1372],['r',1258,1283,1296,1322],['r',1150,1190,1302,1304],
['r',1221,1221,1228,1265],['c',1237,1238,1266,1276],['c',1250,1288,1298,1298],['r',1258,1266,1296,1322],['c',1275,1280,1301,1322],
['c',1295,1300,1322,1354],['r',1247,1290,1322,1326],['c',1296,1334,1342,1364],['c',1288,1360,1363,1380],['r',1318,1322,1350,1376],
['r',1247,1269,1320,1332],['c',1255,1266,1276,1316],['c',1268,1282,1342,1380],['r',1168,1168,1357,1358],['c',974,1081,1142,1162],
['r',1064,1172,1180,1180],['r',1106,1180,1190,1192],['r',1108,1131,1186,1214],['r',1095,1120,1142,1156],['r',1033,1055,1126,1150],
['c',1052,1088,1098,1110],['c',1078,1092,1142,1152],['c',1128,1140,1166,1177],['r',1086,1088,1148,1150],['r',888,888,1068,1070],
['d',666,666,666,666],['r',424,594,611,824],['r',341,341,660,660],['r',70,141,304,450],['r',168,325,342,420],
['c',365,409,598,598],['r',535,598,670,676],['c',600,631,713,735],['r',677,698,718,745],['c',678,704,716,752],
['c',715,725,747,755],['c',725,736,765,797],['r',708,708,768,768],['r',632,670,698,730],['c',652,694,758,760],
['r',742,777,830,850],['r',760,778,792,795],['c',752,752,818,830],['r',800,820,850,862],['r',808,812,818,830],
['c',805,810,830,842],['c',795,815,830,842],['c',815,815,865,883],['c',850,850,910,925],['r',890,892,906,925],
['c',900,902,952,963],['r',940,946,968,995],['c',945,948,1000,1018],['c',985,1002,1022,1032],['c',1012,1024,1052,1067],
['r',1012,1014,1040,1052],['r',988,1003,1015,1038],['r',930,930,996,1003],['c',936,936,950,965],['r',936,945,965,965],
['r',729,729,950,952],['d',493,493,493,605],['c',234,378,530,600],['r',420,473,790,790],['c',518,538,731,731],
['r',497,497,872,872],['c',345,451,479,496],['c',451,535,550,572],['r',435,452,498,545],['r',203,400,522,634],
['r',303,400,536,585],['c',452,462,668,668],['r',425,425,737,782],['r',212,365,418,554],['r',330,418,481,492],
['r',168,283,435,534],['c',70,317,364,402],['c',382,492,561,634],['c',620,628,813,813],['c',746,878,969,994],
['r',836,916,990,1105],['c',895,960,1098,1135],['c',1138,1140,1298,1298],['r',1213,1290,1415,1440],['c',1237,1282,1416,1432],
['r',1248,1248,1377,1422],['r',1108,1142,1172,1222],['r',1036,1062,1148,1215],['r',1008,1080,1100,1122],['r',938,968,1104,1104],
['r',855,878,965,995],['r',795,858,878,925],['r',800,806,892,912],['c',784,812,1030,1032],['r',950,950,1082,1098],
['r',878,885,934,968],['c',852,856,905,962],['c',890,912,952,962],['r',915,915,965,970],['c',873,917,960,962],
['r',925,948,961,988],['r',925,925,962,984],['r',868,875,925,925],['r',855,865,878,892],['c',866,870,915,952],
['r',900,904,916,948],['r',708,750,886,886],['r',700,740,750,785],['r',655,705,746,758],['c',670,677,745,768],
['c',745,752,792,822],['c',778,798,890,893],['c',875,905,948,985],['c',933,950,1087,1102],['r',985,1003,1100,1100],
['r',965,966,1002,1002],['r',912,923,955,955],['c',915,926,980,992],['c',965,975,1038,1052],['c',1040,1048,1097,1097],
['r',1068,1069,1085,1108],['c',1070,1072,1138,1163],['r',1100,1127,1162,1162],['c',1098,1124,1167,1170],['c',1150,1178,1252,1302]
];

var gC = document.getElementById('candles');
function wick(cls, x, y1, y2) {
  if (y2 > y1) el(gC, 'line', { 'class': cls, x1: x + .5, x2: x + .5, y1: y1, y2: y2 });
}
candles.forEach(function (c, i) {
  var x = cx(i), hi = py(c[1]), top = py(c[2]), bot = py(c[3]), lo = py(c[4]);
  if (c[0] === 'd') {
    el(gC, 'line', { 'class': 'wick-w', x1: x - 5, x2: x + 5, y1: top + .5, y2: top + .5 });
    wick('wick-w', x, hi, lo);
    return;
  }
  if (c[0] === 'r') {
    wick('wick-r', x, hi, top); wick('wick-r', x, bot, lo);
    el(gC, 'rect', { 'class': 'body-r', x: x - 5 + .5, y: top + .5, width: 10, height: Math.max(bot - top, 2) });
  } else {
    wick('wick-c', x, hi, top); wick('wick-c', x, bot, lo);
    el(gC, 'rect', { 'class': 'body-c', x: x - 5, y: top, width: 11, height: Math.max(bot - top, 2) });
  }
});

/* moving averages: three runs of x,y pairs, one per horizontal band of the pane */
var bands = [0, 600, 1180];
var lines = [
{ cls: 'line-g', runs: [
[17,1428,90,1420,150,1410,220,1400,300,1392,385,1382,487,1375,585,1365,688,1355,789,1343,890,1328,990,1303,1056,1275,1091,1260,1126,1235,1158,1215,1193,1198,1260,1182,1327,1155,1429,1128,1495,1105,1568,1085],
[0,1085,30,1078,128,1050,194,1030,264,1017,331,997,429,985,531,970,632,950,700,925,767,902,868,860,970,815,1036,790,1135,745,1205,725,1272,720,1339,715,1405,722,1472,738],
[0,755,58,778,90,788,160,797,227,805,293,812,340,813,415,826,480,829,580,833,680,830,764,826,830,820,897,823,915,819,1082,819,1133,828,1199,848,1266,872]
]},
{ cls: 'line-m', runs: [
[17,1360,49,1360,84,1354,125,1350,150,1342,200,1336,252,1332,319,1327,385,1320,452,1312,519,1300,585,1298,620,1295,656,1283,688,1268,723,1262,789,1248,856,1240,923,1226,958,1216,990,1195,1023,1165,1056,1130,1091,1080,1126,1025,1158,965,1193,930,1225,895,1270,855,1327,820,1394,780,1460,730,1527,695,1568,680],
[0,685,30,665,61,655,96,652,128,662,162,675,194,705,229,745,264,770,296,785,331,800,397,830,429,850,499,870,566,895,598,910,632,905,664,893,700,875,735,860,767,855,801,840,868,805,935,755,970,730,1002,715,1036,690,1068,660,1103,625,1135,590,1170,555,1205,535,1237,528,1272,530,1304,545,1339,570,1370,610,1405,645,1441,680,1472,720,1507,748],
[0,760,22,780,58,815,90,845,125,865,160,875,192,895,227,930,258,960,293,985,325,1010,360,1028,395,1034,465,1034,493,1027,528,1005,560,980,595,955,630,940,662,920,697,905,729,882,764,872,795,870,830,873,866,883,897,882,964,888,1030,890,1066,898,1133,910,1199,935,1234,955,1266,966]
]},
{ cls: 'line-y', runs: [
[17,1376,49,1370,84,1355,116,1345,150,1322,185,1305,217,1290,252,1287,284,1283,319,1278,351,1276,385,1272,421,1278,452,1283,487,1300,519,1306,554,1306,585,1306,620,1300,656,1285,688,1270,723,1260,754,1240,789,1218,821,1185,856,1170,891,1155,923,1142,958,1130,990,1108,1023,1060,1056,990,1091,905,1126,820,1158,745,1193,695,1225,635,1260,590,1292,555,1327,540,1361,548,1394,565,1429,600,1460,660,1495,700,1527,722,1568,742],
[0,740,30,748,61,757,96,768,128,773,162,780,194,800,229,822,264,838,296,858,331,875,362,890,397,908,429,935,464,952,499,968,531,978,566,981,598,982,632,960,664,905,700,855,735,810,767,780,801,725,833,680,868,640,900,585,935,535,970,500,1002,520,1036,508,1068,495,1103,465,1135,445,1170,436,1205,436,1237,478,1272,545,1304,590,1339,625,1370,720,1405,805,1441,900,1472,1000,1507,1065],
[0,1090,22,1130,58,1150,90,1152,125,1148,160,1122,192,1075,227,1050,258,995,293,965,325,945,360,932,395,917,427,918,462,925,493,925,528,935,560,915,595,910,630,915,662,895,697,875,729,850,764,830,795,820,830,815,866,822,897,848,932,857,964,865,998,880,1030,905,1066,940,1101,980,1133,1005,1167,1030,1199,1045,1234,1050,1266,1072]
]},
{ cls: 'line-w', runs: [
[17,1342,49,1326,84,1322,116,1312,150,1285,185,1262,217,1248,252,1252,284,1247,319,1270,351,1293,385,1296,421,1315,452,1328,487,1330,519,1318,554,1318,585,1318,620,1285,656,1240,688,1222,723,1205,754,1157,789,1148,821,1128,856,1115,891,1110,923,1117,958,1110,990,1068,1023,1000,1056,880,1091,700,1126,510,1158,415,1193,402,1225,401,1260,475,1292,590,1327,665,1361,700,1394,730,1429,730,1460,722,1495,733,1527,738,1560,738],
[0,742,30,770,61,790,96,800,128,810,162,820,194,835,229,848,264,865,296,895,331,925,362,945,397,970,429,995,464,1012,499,1018,531,1005,566,992,598,970,632,925,664,810,700,710,735,630,767,590,801,545,833,542,868,542,900,540,935,478,970,456,1002,492,1036,462,1068,452,1103,456,1135,435,1170,373,1205,400,1237,510,1272,610,1304,760,1339,880,1370,1015,1405,1090,1441,1190,1472,1275,1507,1280],
[0,1268,22,1225,60,1185,90,1080,125,1000,160,960,192,915,227,907,258,905,293,905,325,928,360,945,395,925,427,925,462,938,493,940,528,925,560,912,595,902,630,892,662,858,697,838,729,795,764,765,795,747,830,775,866,830,897,905,932,945,964,980,998,985,1030,992,1066,982,1101,1000,1133,1030,1167,1070,1199,1100,1234,1122,1266,1152]
]}
];
var gL = document.getElementById('malines');
lines.forEach(function (ln) {
  var pts = [];
  ln.runs.forEach(function (run, b) {
    for (var i = 0; i < run.length; i += 2) {
      pts.push((bands[b] + run[i] / 2.613).toFixed(1) + ',' + (70 + run[i + 1] / 2.306).toFixed(1));
    }
  });
  el(gL, 'polyline', { 'class': 'ma-line ' + ln.cls, points: pts.join(' ') });
});

/* volume bars: candle index and height of the top */
var bars = [[2,1130],[3,1214],[4,1000],[5,1168],[15,1324],[19,538],[20,924],[23,1114],[24,1017],[25,1176],[29,1244],[30,1387],[31,232],[32,529],[33,84],[34,462],[62,1303],[63,1375],[64,1379],[65,1265],[66,1013],[68,441],[70,807],[72,912],[73,714],[74,551],[75,702],[78,454],[80,534],[91,1068],[92,1080],[93,1068],[94,1017],[95,1021],[96,1034],[97,1101],[107,1236],[108,1240],[109,1290],[111,1009],[112,1068],[113,1085]];
var gB = document.getElementById('bars');
bars.forEach(function (b) {
  var x = cx(b[0]), top = Math.round(740 + b[1] / 2.8), base = 1272;
  el(gB, 'rect', { 'class': 'bar-i', x: x - 2, y: top, width: 5, height: base - top });
  el(gB, 'rect', { 'class': 'bar-o', x: x - 6 + .5, y: top + .5, width: 12, height: base - top });
});
```
